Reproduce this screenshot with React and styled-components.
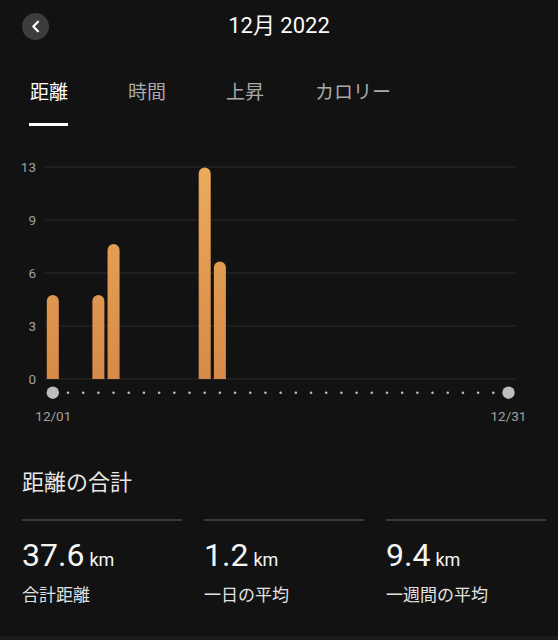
import React from 'react';
import styled, { createGlobalStyle } from 'styled-components';

const GlobalStyle = createGlobalStyle`
    body {
        margin: 0;
        background: #121212;
        font-family: Roboto, "Noto Sans CJK JP", sans-serif;
    }
`;

const Page = styled.div`
    width: 558px;
    height: 640px;
    background: #121212;
    display: flex;
    flex-direction: column;
    overflow: hidden;
`;

const Header = styled.div`
    height: 50px;
    display: grid;
    grid-template-columns: 70px 1fr 70px;
    align-items: center;
`;

const BackButton = styled.button`
    width: 27px;
    height: 27px;
    margin-left: 22px;
    padding: 0;
    border: none;
    border-radius: 50%;
    background: #3d3d3d;
    display: flex;
    align-items: center;
    justify-content: center;
`;

const Title = styled.div`
    text-align: center;
    color: #fafafa;
    font-size: 22px;
    line-height: 52px;
`;

const Tabs = styled.div`
    margin-top: 30px;
    padding-left: 30px;
    display: grid;
    grid-template-columns: 98px 98px 89px auto;
`;

const Tab = styled.div`
    display: flex;
    flex-direction: column;
    align-items: flex-start;
    font-size: 19px;
    line-height: 25px;
    color: ${(p) => (p.$active ? '#ffffff' : '#a9a9a9')};
`;

const Underline = styled.div`
    width: 39px;
    height: 3px;
    margin-top: 18px;
    margin-left: -1px;
    background: ${(p) => (p.$active ? '#ffffff' : 'transparent')};
`;

const ChartWrapper = styled.div`
    margin-top: 24px;
    height: 280px;
`;

const Summary = styled.div`
    flex: 1;
    margin-top: 38px;
    padding-left: 22px;
`;

const SummaryTitle = styled.div`
    font-size: 22px;
    line-height: 30px;
    color: #e8e8e8;
`;

const Stats = styled.div`
    margin-top: 21px;
    display: grid;
    grid-template-columns: repeat(3, 160px);
    column-gap: 22px;
`;

const Stat = styled.div`
    border-top: 2px solid #3a3a3a;
    padding-top: 15px;
`;

const ValueRow = styled.div`
    line-height: 38px;
    color: #f5f5f5;
    white-space: nowrap;
`;

const Value = styled.span`
    font-size: 32px;
`;

const Unit = styled.span`
    font-size: 18px;
    margin-left: 5px;
`;

const StatLabel = styled.div`
    margin-top: 3px;
    font-size: 17px;
    line-height: 24px;
    color: #e2e2e2;
`;

const BottomBar = styled.div`
    height: 4px;
    background: #1b1b1b;
`;

const tabs = ['距離', '時間', '上昇', 'カロリー'];

// day -> top y of bar (0 line at 229 in chart coords)
const bars = [
    { day: 1, top: 145 },
    { day: 4, top: 145 },
    { day: 5, top: 94 },
    { day: 11, top: 17.5 },
    { day: 12, top: 111.5 },
];

const gridLines = [
    { label: '13', y: 17 },
    { label: '9', y: 70 },
    { label: '6', y: 123 },
    { label: '3', y: 176 },
    { label: '0', y: 229 },
];

const stats = [
    { value: '37.6', label: '合計距離' },
    { value: '1.2', label: '一日の平均' },
    { value: '9.4', label: '一週間の平均' },
];

const dayX = (day) => 52.8 + (day - 1) * 15.19;

const barPath = (cx, top, bottom) => {
    const w = 12;
    const r = 6;
    const x = cx - w / 2;
    return `M${x} ${bottom} V${top + r} A${r} ${r} 0 0 1 ${x + w} ${top + r} V${bottom} Z`;
};

const Chart = () => (
    <svg width="558" height="280" viewBox="0 0 558 280">
        <defs>
            <linearGradient id="barFill" gradientUnits="userSpaceOnUse" x1="0" y1="17" x2="0" y2="229">
                <stop offset="0" stopColor="#ebab5a" />
                <stop offset="1" stopColor="#d78a48" />
            </linearGradient>
        </defs>
        {gridLines.map((g) => (
            <g key={g.label}>
                <line x1="45" x2="516" y1={g.y} y2={g.y} stroke="#2b2b2b" strokeWidth="1.2" />
                <text x="36" y={g.y + 4.8} textAnchor="end" fontSize="13.5" fill="#a0a0a0"
                    fontFamily="Roboto, sans-serif">{g.label}</text>
            </g>
        ))}
        {bars.map((b) => (
            <path key={b.day} d={barPath(dayX(b.day), b.top, 229)} fill="url(#barFill)" />
        ))}
        {Array.from({ length: 31 }, (_, i) => i + 1).map((day) => (
            day === 1 || day === 31
                ? <circle key={day} cx={dayX(day)} cy="242.7" r="6.2" fill="#bdbdbd" />
                : <circle key={day} cx={dayX(day)} cy="242.7" r="1.3" fill="#bcbcbc" />
        ))}
        <text x={dayX(1) + 0.5} y="270.5" textAnchor="middle" fontSize="13.5" fill="#a0a0a0"
            fontFamily="Roboto, sans-serif">12/01</text>
        <text x={dayX(31)} y="270.5" textAnchor="middle" fontSize="13.5" fill="#a0a0a0"
            fontFamily="Roboto, sans-serif">12/31</text>
    </svg>
);

const App = () => (
    <Page>
        <GlobalStyle />
        <Header>
            <BackButton aria-label="back">
                <svg width="27" height="27" viewBox="0 0 27 27">
                    <path d="M16 8.7 L11.3 13.5 L16 18.3" fill="none" stroke="#ffffff"
                        strokeWidth="2.2" strokeLinecap="round" strokeLinejoin="round" />
                </svg>
            </BackButton>
            <Title>12月 2022</Title>
            <div />
        </Header>
        <Tabs>
            {tabs.map((t, i) => (
                <Tab key={t} $active={i === 0}>
                    {t}
                    <Underline $active={i === 0} />
                </Tab>
            ))}
        </Tabs>
        <ChartWrapper>
            <Chart />
        </ChartWrapper>
        <Summary>
            <SummaryTitle>距離の合計</SummaryTitle>
            <Stats>
                {stats.map((s) => (
                    <Stat key={s.label}>
                        <ValueRow>
                            <Value>{s.value}</Value>
                            <Unit>km</Unit>
                        </ValueRow>
                        <StatLabel>{s.label}</StatLabel>
                    </Stat>
                ))}
            </Stats>
        </Summary>
        <BottomBar />
    </Page>
);

export default App;
